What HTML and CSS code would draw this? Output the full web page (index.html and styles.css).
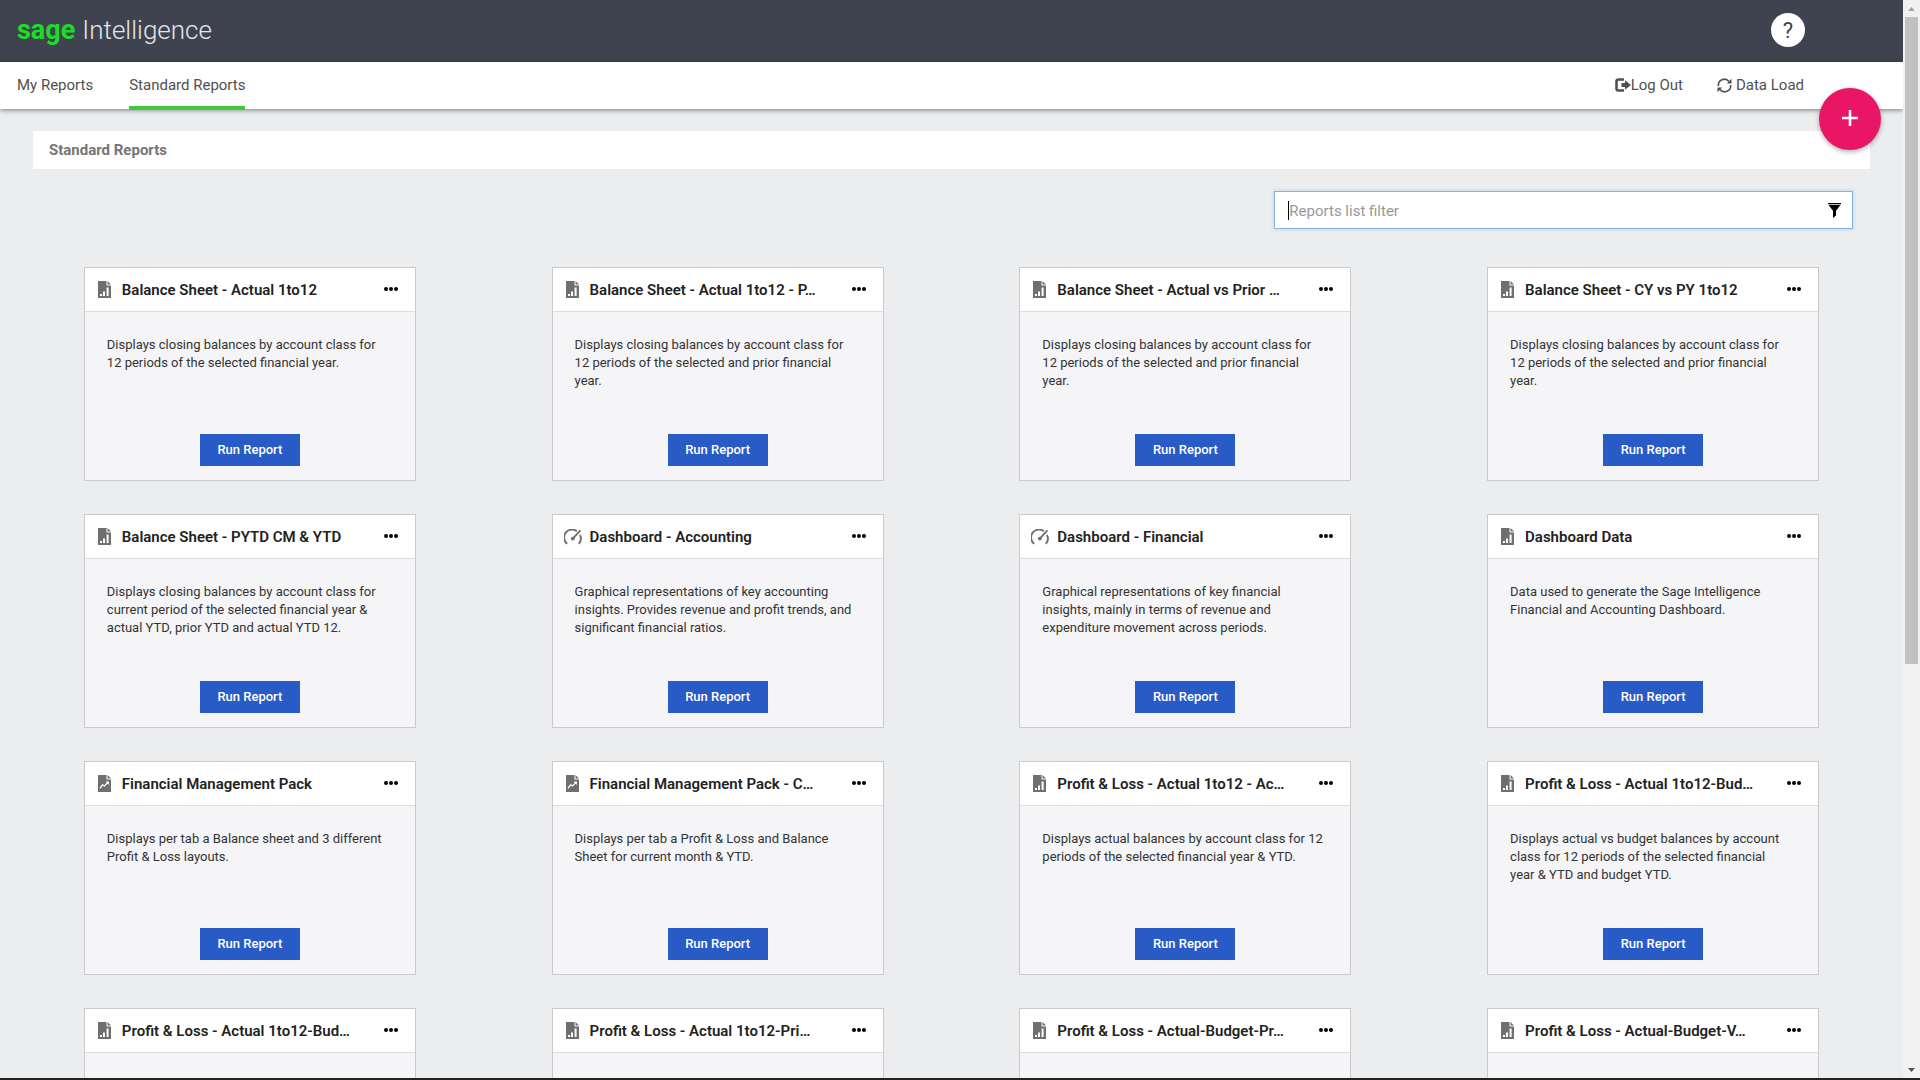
FILE: index.html
```html
<!DOCTYPE html>
<html lang="en">
<head>
  <meta charset="UTF-8">
  <meta name="viewport" content="width=device-width, initial-scale=1.0">
  <title>Sage Intelligence - Standard Reports</title>
  <link rel="stylesheet" href="styles.css">
</head>
<body>
  <!-- Shared icons -->
  <svg class="sprite" aria-hidden="true">
    <symbol id="icon-bars" viewBox="0 0 13 17">
      <path fill="#6f6f6f" d="M0 0h8.5v4.5H13V17H0z"/>
      <path fill="#6f6f6f" d="M9.5 0v3.5H13z"/>
      <path fill="#fff" d="M2 13h2v2H2zM5 10.500h2V15H5zM8.600 6.500h2V15h-2z"/>
    </symbol>
    <symbol id="icon-trend" viewBox="0 0 13 17">
      <path fill="#6f6f6f" d="M0 0h8.5v4.5H13V17H0z"/>
      <path fill="#6f6f6f" d="M9.5 0v3.5H13z"/>
      <path fill="none" stroke="#fff" stroke-width="1.3" d="M2 13.3l2.5-3.5 2 1.2 3.2-3.4"/>
      <path fill="#fff" d="M7.6 6.6h3.3v3.3z"/>
    </symbol>
    <symbol id="icon-gauge" viewBox="0 0 18 16">
      <path fill="none" stroke="#6f6f6f" stroke-width="1.9" d="M3.200 14.800A7.6 7.6 0 0 1 12.800 2.200M15.900 6A7.6 7.6 0 0 1 14.800 14.800"/>
      <path stroke="#6f6f6f" stroke-width="1.9" d="M9 9.3L16.4 1.4"/>
      <circle cx="8.8" cy="9.6" r="1.9" fill="#6f6f6f"/>
    </symbol>
    <symbol id="icon-dots" viewBox="0 0 14 4">
      <circle cx="2" cy="2" r="2"/><circle cx="7" cy="2" r="2"/><circle cx="12" cy="2" r="2"/>
    </symbol>
  </svg>

  <div class="window">
    <div class="page">
      <header class="topbar">
        <a class="logo" href="#"><span class="logo-sage">sage</span> <span class="logo-name">Intelligence</span></a>
        <button class="help" type="button" aria-label="Help">?</button>
      </header>

      <nav class="menu">
        <a class="menu-link" href="#">My Reports</a>
        <a class="menu-link active" href="#">Standard Reports</a>
        <div class="menu-right">
          <a class="menu-link" href="#"><svg class="icon-logout" viewBox="0 0 16 14"><path fill="none" stroke="currentColor" stroke-width="2.6" d="M9 1.5H3.5Q1.5 1.5 1.5 3.5v7q0 2 2 2H9"/><path fill="currentColor" d="M6.500 5H10V2.3L16 7l-6 4.7V9H6.500z"/></svg>Log Out</a>
          <a class="menu-link" href="#"><svg class="icon-sync" viewBox="0 0 16 16"><path fill="none" stroke="currentColor" stroke-width="1.7" d="M1.5 8.5A6.400 6.400 0 0 1 12.800 3.700M14.500 7.5A6.400 6.400 0 0 1 3.200 12.300"/><path fill="currentColor" d="M15.500 .8v5h-5zM.5 15.2v-5h5z"/></svg> Data Load</a>
        </div>
        <button class="add" type="button" aria-label="Add report"><svg viewBox="0 0 16 16"><path stroke="#fff" stroke-width="2.6" d="M0 8h16M8 0v16"/></svg></button>
      </nav>

      <main>
        <h1 class="heading">Standard Reports</h1>

        <div class="filter-row">
          <div class="filter">
            <span class="caret"></span>
            <input type="text" id="filter" placeholder="Reports list filter" aria-label="Reports list filter">
            <svg class="icon-filter" viewBox="0 0 13 15"><path d="M0 0h13v1.2H0zM.6 2h11.8L8 7.7V12.500L5 15V7.700z"/></svg>
          </div>
        </div>

        <div class="reports" id="reports"></div>
      </main>
    </div>

    <div class="scrollbar" aria-hidden="true">
      <svg viewBox="0 0 17 17"><path fill="#a3a3a3" d="M5 11l3.500-4L12 11z"/></svg>
      <div class="track"><div class="thumb"></div></div>
      <svg viewBox="0 0 17 17"><path fill="#505050" d="M5 7h7l-3.500 4z"/></svg>
    </div>
  </div>
  <div class="bottom-edge"></div>

  <script>
    const reports = [
      ['bars', 'Balance Sheet - Actual 1to12', 'Displays closing balances by account class for 12 periods of the selected financial year.'],
      ['bars', 'Balance Sheet - Actual 1to12 - P…', 'Displays closing balances by account class for 12 periods of the selected and prior financial year.'],
      ['bars', 'Balance Sheet - Actual vs Prior …', 'Displays closing balances by account class for 12 periods of the selected and prior financial year.'],
      ['bars', 'Balance Sheet - CY vs PY 1to12', 'Displays closing balances by account class for 12 periods of the selected and prior financial year.'],
      ['bars', 'Balance Sheet - PYTD CM &amp; YTD', 'Displays closing balances by account class for current period of the selected financial year &amp; actual YTD, prior YTD and actual YTD 12.'],
      ['gauge', 'Dashboard - Accounting', 'Graphical representations of key accounting insights. Provides revenue and profit trends, and significant financial ratios.'],
      ['gauge', 'Dashboard - Financial', 'Graphical representations of key financial insights, mainly in terms of revenue and expenditure movement across periods.'],
      ['bars', 'Dashboard Data', 'Data used to generate the Sage Intelligence Financial and Accounting Dashboard.'],
      ['trend', 'Financial Management Pack', 'Displays per tab a Balance sheet and 3 different Profit &amp; Loss layouts.'],
      ['trend', 'Financial Management Pack - C…', 'Displays per tab a Profit &amp; Loss and Balance Sheet for current month &amp; YTD.'],
      ['bars', 'Profit &amp; Loss - Actual 1to12 - Ac…', 'Displays actual balances by account class for 12 periods of the selected financial year &amp; YTD.'],
      ['bars', 'Profit &amp; Loss - Actual 1to12-Bud…', 'Displays actual vs budget balances by account class for 12 periods of the selected financial year &amp; YTD and budget YTD.'],
      ['bars', 'Profit &amp; Loss - Actual 1to12-Bud…', ''],
      ['bars', 'Profit &amp; Loss - Actual 1to12-Pri…', ''],
      ['bars', 'Profit &amp; Loss - Actual-Budget-Pr…', ''],
      ['bars', 'Profit &amp; Loss - Actual-Budget-V…', '']
    ];

    let html = '';
    for (const [icon, title, text] of reports) {
      const body = text ? `<p>${text}</p><button class="run" type="button">Run Report</button>` : '';

      html += `
        <article class="card">
          <div class="card-head">
            <svg class="card-icon ${icon}"><use href="#icon-${icon}"/></svg>
            <h2>${title}</h2>
            <button class="more" type="button" aria-label="More options"><svg><use href="#icon-dots"/></svg></button>
          </div>
          <div class="card-body">${body}</div>
        </article>
      `;
    }
    document.getElementById('reports').innerHTML = html;
  </script>
</body>
</html>
```
FILE: styles.css
```css
* {
  box-sizing: border-box;
}
body {
  margin: 0;
  height: 100vh;
  display: flex;
  flex-direction: column;
  overflow: hidden;
  background-color: #ebedef;
  color: #222;
  font-family: Roboto, Arial, sans-serif;
  font-size: 15px;
}
a {
  color: inherit;
  text-decoration: none;
}
button {
  border: none;
  padding: 0;
  font-family: inherit;
  cursor: pointer;
}
.sprite {
  display: none;
}
.window {
  flex: 1;
  min-height: 0;
  display: flex;
}
.page {
  flex: 1;
  min-width: 0;
  overflow: hidden;
}
.bottom-edge {
  height: 2px;
  background-color: #222;
}

/* Top bar */
.topbar {
  display: flex;
  align-items: center;
  justify-content: space-between;
  height: 62px;
  padding: 0 98px 2px 17px;
  background-color: #3e434f;
}
.logo {
  display: flex;
  align-items: baseline;
  gap: 7px;
  line-height: 32px;
}
.logo-sage {
  color: #1fda2a;
  font-size: 27px;
  font-weight: 700;
}
.logo-name {
  color: #e4e6ea;
  font-size: 26px;
  font-weight: 300;
}
.help {
  width: 34px;
  height: 34px;
  border-radius: 50%;
  background-color: #fff;
  color: #3e434f;
  font-size: 22px;
  line-height: 36px;
}

/* Menu */
.menu {
  position: relative;
  display: flex;
  gap: 36px;
  height: 47px;
  padding: 0 99px 0 17px;
  background-color: #fff;
  box-shadow: 0 1px 5px rgba(0, 0, 0, 0.5);
  color: #505050;
}
.menu-link {
  display: flex;
  align-items: center;
  height: 48px;
  padding-top: 2px;
  border-bottom: 4px solid transparent;
}
.menu-link.active {
  border-bottom-color: #40c93a;
}
.menu-right {
  display: flex;
  gap: 34px;
  margin-left: auto;
}
.icon-logout {
  width: 16px;
  height: 14px;
}
.icon-sync {
  width: 15px;
  height: 15px;
  margin-right: 4px;
}
.add {
  position: absolute;
  top: 26px;
  right: 22px;
  width: 62px;
  height: 62px;
  border-radius: 50%;
  background-color: #e91565;
  box-shadow: 0 2px 5px rgba(0, 0, 0, 0.3);
}
.add svg {
  width: 16px;
  height: 16px;
}

/* Content */
main {
  padding-top: 22px;
}
.heading {
  margin: 0 33px;
  padding: 1px 16px 0;
  background-color: #fff;
  color: #757575;
  font-size: 15px;
  font-weight: 700;
  line-height: 37px;
}
.filter-row {
  display: flex;
  justify-content: flex-end;
  margin: 22px 33px 38px;
}
.filter {
  display: flex;
  align-items: center;
  width: 31.5%;
  height: 38px;
  margin-right: 17px;
  padding: 1px 11px 0 13px;
  border: 1px solid #7db4e2;
  background-color: #fff;
  box-shadow: 0 0 4px rgba(102, 175, 233, 0.4);
}
.caret {
  width: 1px;
  height: 19px;
  background-color: #000;
}
.filter input {
  flex: 1;
  min-width: 0;
  padding: 0;
  border: none;
  outline: none;
  background: none;
  font-family: inherit;
  font-size: 15px;
}
.filter input::placeholder {
  color: #999;
}
.icon-filter {
  width: 13px;
  height: 15px;
}

/* Report cards */
.reports {
  display: grid;
  grid-template-columns: repeat(4, 1fr);
  row-gap: 33px;
  justify-items: center;
  padding: 0 16px;
}
.card {
  width: 71%;
  border: 1px solid #c8cacc;
  background-color: #f5f5f8;
}
.card-head {
  display: flex;
  align-items: center;
  height: 44px;
  padding: 0 17px 0 13px;
  border-bottom: 1px solid #dcdcdc;
  background-color: #fff;
}
.card-icon {
  width: 13px;
  height: 17px;
  margin-right: 11px;
}
.card-icon.gauge {
  width: 18px;
  height: 16px;
  margin: 0 8px 0 -2px;
}
.card-head h2 {
  flex: 1;
  margin: 0;
  font-size: 15px;
  font-weight: 600;
  white-space: nowrap;
}
.more {
  padding-bottom: 2px;
  background: none;
}
.more svg {
  display: block;
  width: 14px;
  height: 4px;
}
.card-body {
  display: flex;
  flex-direction: column;
  align-items: center;
  justify-content: space-between;
  height: 168px;
  padding: 24px 22px 14px;
}
.card-body p {
  align-self: stretch;
  margin: 0;
  padding-right: 4px;
  color: #333;
  font-size: 13px;
  line-height: 18px;
}
.run {
  width: 100px;
  height: 32px;
  background-color: #285bc5;
  color: #fff;
  font-size: 13px;
  font-weight: 500;
  line-height: 30px;
}

/* Scrollbar */
.scrollbar {
  display: flex;
  flex-direction: column;
  width: 17px;
  background-color: #f1f1f1;
}
.scrollbar svg {
  width: 17px;
  height: 17px;
}
.track {
  flex: 1;
  padding: 0 2px;
}
.thumb {
  height: 62%;
  background-color: #c1c1c1;
}
```
